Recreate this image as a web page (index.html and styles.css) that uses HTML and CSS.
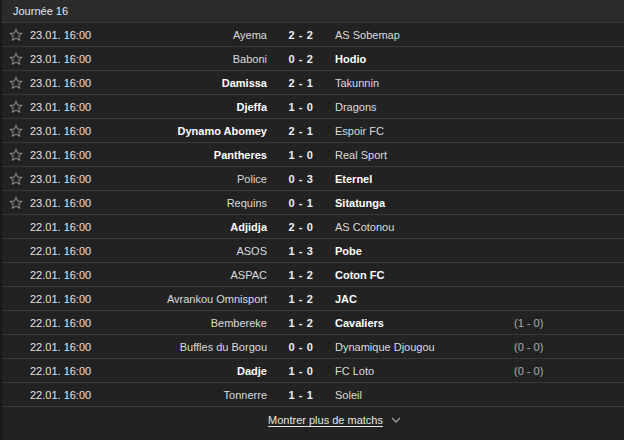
FILE: index.html
```html
<!DOCTYPE html>
<html lang="fr">
<head>
<meta charset="utf-8">
<title>Journée 16</title>
<link rel="stylesheet" href="styles.css">
</head>
<body>
<div class="panel">
  <div class="head">Journée 16</div>
  <div class="rows">
    <div class="row"><span class="star"><svg viewBox="0 0 14 14" width="14" height="14"><path d="M7 1.2 8.7 5.1 12.9 5.4 9.7 8.1 10.7 12.3 7 10.1 3.3 12.3 4.3 8.1 1.1 5.4 5.3 5.1Z"/></svg></span><span class="date">23.01. 16:00</span><span class="home">Ayema</span><span class="score">2 - 2</span><span class="away">AS Sobemap</span><span class="extra"></span></div>
    <div class="row"><span class="star"><svg viewBox="0 0 14 14" width="14" height="14"><path d="M7 1.2 8.7 5.1 12.9 5.4 9.7 8.1 10.7 12.3 7 10.1 3.3 12.3 4.3 8.1 1.1 5.4 5.3 5.1Z"/></svg></span><span class="date">23.01. 16:00</span><span class="home">Baboni</span><span class="score">0 - 2</span><span class="away win">Hodio</span><span class="extra"></span></div>
    <div class="row"><span class="star"><svg viewBox="0 0 14 14" width="14" height="14"><path d="M7 1.2 8.7 5.1 12.9 5.4 9.7 8.1 10.7 12.3 7 10.1 3.3 12.3 4.3 8.1 1.1 5.4 5.3 5.1Z"/></svg></span><span class="date">23.01. 16:00</span><span class="home win">Damissa</span><span class="score">2 - 1</span><span class="away">Takunnin</span><span class="extra"></span></div>
    <div class="row"><span class="star"><svg viewBox="0 0 14 14" width="14" height="14"><path d="M7 1.2 8.7 5.1 12.9 5.4 9.7 8.1 10.7 12.3 7 10.1 3.3 12.3 4.3 8.1 1.1 5.4 5.3 5.1Z"/></svg></span><span class="date">23.01. 16:00</span><span class="home win">Djeffa</span><span class="score">1 - 0</span><span class="away">Dragons</span><span class="extra"></span></div>
    <div class="row"><span class="star"><svg viewBox="0 0 14 14" width="14" height="14"><path d="M7 1.2 8.7 5.1 12.9 5.4 9.7 8.1 10.7 12.3 7 10.1 3.3 12.3 4.3 8.1 1.1 5.4 5.3 5.1Z"/></svg></span><span class="date">23.01. 16:00</span><span class="home win">Dynamo Abomey</span><span class="score">2 - 1</span><span class="away">Espoir FC</span><span class="extra"></span></div>
    <div class="row"><span class="star"><svg viewBox="0 0 14 14" width="14" height="14"><path d="M7 1.2 8.7 5.1 12.9 5.4 9.7 8.1 10.7 12.3 7 10.1 3.3 12.3 4.3 8.1 1.1 5.4 5.3 5.1Z"/></svg></span><span class="date">23.01. 16:00</span><span class="home win">Pantheres</span><span class="score">1 - 0</span><span class="away">Real Sport</span><span class="extra"></span></div>
    <div class="row"><span class="star"><svg viewBox="0 0 14 14" width="14" height="14"><path d="M7 1.2 8.7 5.1 12.9 5.4 9.7 8.1 10.7 12.3 7 10.1 3.3 12.3 4.3 8.1 1.1 5.4 5.3 5.1Z"/></svg></span><span class="date">23.01. 16:00</span><span class="home">Police</span><span class="score">0 - 3</span><span class="away win">Eternel</span><span class="extra"></span></div>
    <div class="row"><span class="star"><svg viewBox="0 0 14 14" width="14" height="14"><path d="M7 1.2 8.7 5.1 12.9 5.4 9.7 8.1 10.7 12.3 7 10.1 3.3 12.3 4.3 8.1 1.1 5.4 5.3 5.1Z"/></svg></span><span class="date">23.01. 16:00</span><span class="home">Requins</span><span class="score">0 - 1</span><span class="away win">Sitatunga</span><span class="extra"></span></div>
    <div class="row"><span class="star"></span><span class="date">22.01. 16:00</span><span class="home win">Adjidja</span><span class="score">2 - 0</span><span class="away">AS Cotonou</span><span class="extra"></span></div>
    <div class="row"><span class="star"></span><span class="date">22.01. 16:00</span><span class="home">ASOS</span><span class="score">1 - 3</span><span class="away win">Pobe</span><span class="extra"></span></div>
    <div class="row"><span class="star"></span><span class="date">22.01. 16:00</span><span class="home">ASPAC</span><span class="score">1 - 2</span><span class="away win">Coton FC</span><span class="extra"></span></div>
    <div class="row"><span class="star"></span><span class="date">22.01. 16:00</span><span class="home">Avrankou Omnisport</span><span class="score">1 - 2</span><span class="away win">JAC</span><span class="extra"></span></div>
    <div class="row"><span class="star"></span><span class="date">22.01. 16:00</span><span class="home">Bembereke</span><span class="score">1 - 2</span><span class="away win">Cavaliers</span><span class="extra">(1 - 0)</span></div>
    <div class="row"><span class="star"></span><span class="date">22.01. 16:00</span><span class="home">Buffles du Borgou</span><span class="score">0 - 0</span><span class="away">Dynamique Djougou</span><span class="extra">(0 - 0)</span></div>
    <div class="row"><span class="star"></span><span class="date">22.01. 16:00</span><span class="home win">Dadje</span><span class="score">1 - 0</span><span class="away">FC Loto</span><span class="extra">(0 - 0)</span></div>
    <div class="row"><span class="star"></span><span class="date">22.01. 16:00</span><span class="home">Tonnerre</span><span class="score">1 - 1</span><span class="away">Soleil</span><span class="extra"></span></div>
  </div>
  <div class="more"><a class="more-link" href="#">Montrer plus de matchs</a><svg class="chev" viewBox="0 0 10 6" width="10" height="6"><path d="M1 1 5 5 9 1"/></svg></div>
</div>
</body>
</html>
```
FILE: styles.css
```css
html, body {
  margin: 0;
  padding: 0;
  background: #222222;
}
body {
  font-family: "Liberation Sans", Arial, sans-serif;
  font-size: 11px;
  color: #dcdcdc;
}
.panel {
  width: 624px;
  height: 440px;
  background: #222222;
  border-left: 2px solid #1b1b1b;
  box-sizing: border-box;
}
.head {
  height: 22px;
  line-height: 22px;
  padding-left: 11px;
  background: #2b2b2b;
  color: #e2e8ee;
  font-size: 11px;
}
.rows {
  border-bottom: 1px solid #393939;
}
.row {
  display: grid;
  grid-template-columns: 28px 100px 137px 68px 179px 1fr;
  align-items: center;
  height: 23px;
  border-top: 1px solid #393939;
  white-space: nowrap;
}
.star {
  display: flex;
  justify-content: center;
  align-items: center;
}
.star svg {
  fill: none;
  stroke: #8a8a8a;
  stroke-width: 1.1;
  stroke-linejoin: round;
}
.date {
  color: #e2e2e2;
}
.home {
  text-align: right;
}
.score {
  text-align: center;
  font-weight: bold;
  color: #f0f0f0;
  letter-spacing: 0.6px;
}
.away {
  text-align: left;
}
.win {
  font-weight: bold;
  color: #ffffff;
}
.extra {
  color: #b0b0b0;
}
.more {
  height: 26px;
  display: flex;
  justify-content: center;
  align-items: center;
  gap: 8px;
  padding-left: 43px;
}
.more-link {
  color: #e6e6e6;
  text-decoration: underline;
  text-underline-offset: 2px;
}
.chev {
  fill: none;
  stroke: #a0a0a0;
  stroke-width: 1.3;
}
```
